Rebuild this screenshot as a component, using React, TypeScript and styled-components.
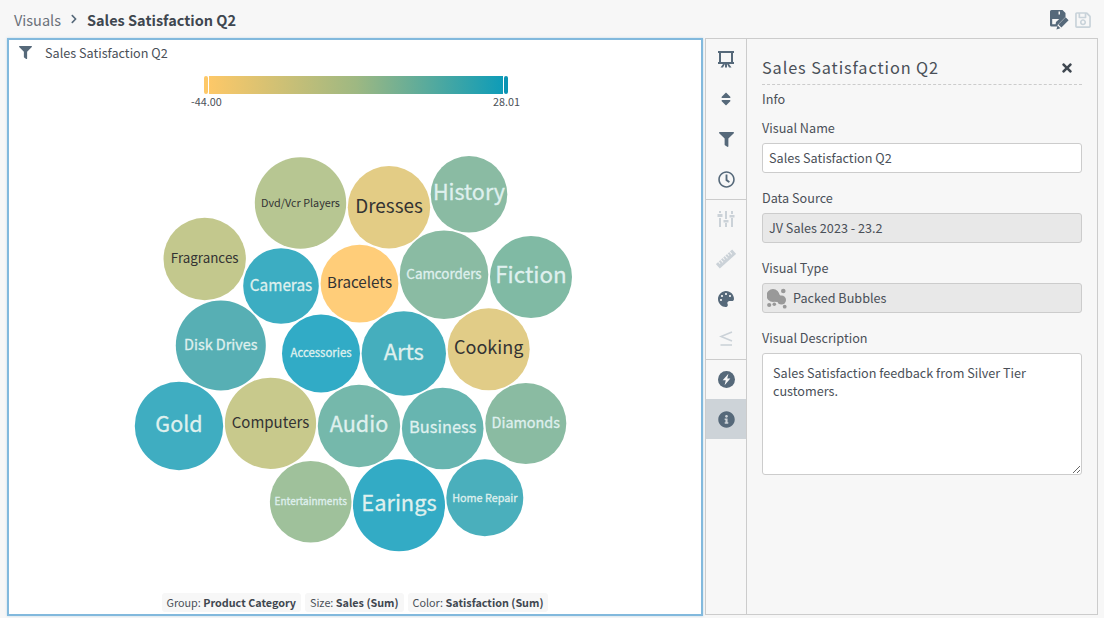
import React from "react"
import styled, { createGlobalStyle } from "styled-components"
import { FaFilter, FaSort, FaRegClock, FaPalette, FaInfoCircle, FaTimes, FaChevronRight, FaRegSave } from "react-icons/fa"

const GlobalStyle = createGlobalStyle`
    html, body {
        margin: 0;
        height: 100%;
        background: #f7f7f7;
        font-family: "Noto Sans CJK SC", "Noto Sans", sans-serif;
        color: #3f4750;
    }
    * { box-sizing: border-box; }
`

const Page = styled.div`
    width: 1104px;
    height: 618px;
    display: flex;
    flex-direction: column;
    overflow: hidden;
`

const Header = styled.header`
    height: 38px;
    padding: 0 12px 0 14px;
    display: flex;
    align-items: center;
    font-size: 14.5px;
`

const Crumb = styled.span`
    color: #6a7079;
`

const CrumbArrow = styled.span`
    display: flex;
    margin: 0 8px;
    font-size: 10px;
    color: #56697a;
`

const CrumbCurrent = styled.strong`
    font-weight: 700;
    color: #3f4750;
`

const HeaderActions = styled.div`
    margin-left: auto;
    padding-top: 2px;
    display: flex;
    align-items: center;
    gap: 5px;
`

const Content = styled.main`
    flex: 1;
    display: flex;
    padding: 0 6px 2px 7px;
    gap: 2px;
    min-height: 0;
`

const ChartPanel = styled.section`
    width: 696px;
    background: #fff;
    border: 2px solid #82b9dd;
    box-shadow: 0 0 2px rgba(130, 185, 221, 0.5);
    display: flex;
    flex-direction: column;
`

const ChartTitle = styled.div`
    height: 24px;
    padding: 0 0 0 10px;
    display: flex;
    align-items: center;
    gap: 13px;
    font-size: 12.65px;
    color: #4a5058;
    svg { color: #56697a; }
`

const Legend = styled.div`
    width: 304px;
    margin: 12px 0 0 195px;
`

const LegendBar = styled.div`
    height: 18px;
    display: flex;
    gap: 1px;
`

const LegendHandle = styled.div<{ $color: string }>`
    width: 4px;
    border-radius: 2px;
    background: ${(p) => p.$color};
`

const LegendRamp = styled.div`
    flex: 1;
    background: linear-gradient(90deg, #fdc868 0%, #9eb882 50%, #0e9cb8 100%);
`

const LegendLabels = styled.div`
    display: flex;
    justify-content: space-between;
    margin: 0 -12px 0 -13px;
    height: 16px;
    line-height: 14px;
    font-size: 10.8px;
    color: #4a5058;
`

const Canvas = styled.svg`
    display: block;
    width: 692px;
    flex: 1;
    min-height: 0;
    text {
        font-family: "Noto Sans CJK SC", "Noto Sans", sans-serif;
        text-anchor: middle;
        dominant-baseline: central;
    }
`

const Tags = styled.div`
    display: flex;
    justify-content: center;
    gap: 4px;
    height: 24px;
    padding: 3px 0 2px;
`

const Tag = styled.span`
    height: 19px;
    padding: 0 5px;
    line-height: 19px;
    border-radius: 3px;
    background: #f7f7f7;
    font-size: 10.8px;
    color: #4a5058;
    b { font-weight: 700; color: #3f4750; }
`

const SidePanel = styled.aside`
    width: 393px;
    height: 577px;
    border: 1px solid #ccc;
    display: flex;
`

const Rail = styled.nav`
    width: 41px;
    border-right: 1px solid #ccc;
    display: flex;
    flex-direction: column;
`

const RailButton = styled.div<{ $active?: boolean; $disabled?: boolean }>`
    height: 40px;
    display: flex;
    align-items: center;
    justify-content: center;
    color: ${(p) => (p.$disabled ? "#cbd2d8" : "#56697a")};
    background: ${(p) => (p.$active ? "#cdd3d8" : "transparent")};
`

const RailDivider = styled.div`
    height: 1px;
    background: #ccc;
    margin-bottom: -1px;
    position: relative;
`

const Form = styled.div`
    flex: 1;
    padding: 0 15px;
    display: flex;
    flex-direction: column;
`

const FormHead = styled.div`
    height: 46px;
    padding-top: 10px;
    border-bottom: 1px dashed #ccc;
    display: flex;
    align-items: center;
    justify-content: space-between;
`

const FormTitle = styled.h2`
    margin: 0;
    font-size: 16.3px;
    font-weight: 400;
    letter-spacing: 0.9px;
    color: #4a5058;
`

const CloseButton = styled.span`
    display: flex;
    margin: 3px 8px 0 0;
    font-size: 14px;
    color: #3f4750;
`

const SectionName = styled.div`
    height: 30px;
    line-height: 28px;
    font-size: 12.65px;
    color: #4a5058;
`

const Label = styled.label`
    display: block;
    height: 28px;
    line-height: 26px;
    font-size: 12.65px;
    color: #4a5058;
`

const Field = styled.div`
    margin-bottom: 12px;
`

const TextInput = styled.input<{ $locked?: boolean }>`
    display: block;
    width: 100%;
    height: 30px;
    padding: 0 6px 1px;
    border: 1px solid #ccc;
    border-radius: 3px;
    background: ${(p) => (p.$locked ? "#e8e8e8" : "#fff")};
    font: 400 12.65px "Noto Sans CJK SC", "Noto Sans", sans-serif;
    color: #4a5058;
    outline: none;
`

const TypeBox = styled.div`
    height: 30px;
    padding: 0 4px;
    display: flex;
    align-items: center;
    gap: 4px;
    border: 1px solid #ccc;
    border-radius: 3px;
    background: #e8e8e8;
    font-size: 12.65px;
    color: #4a5058;
`

const TypeName = styled.span`
    margin-bottom: 2px;
`

const TextArea = styled.textarea`
    display: block;
    width: 100%;
    height: 122px;
    padding: 10px;
    border: 1px solid #ccc;
    border-radius: 3px;
    background: #fff;
    font: 400 12.65px/18px "Noto Sans CJK SC", "Noto Sans", sans-serif;
    color: #4a5058;
    outline: none;
`

interface Bubble {
    name: string
    x: number
    y: number
    r: number
    fill: string
    size: number
    light?: boolean
}

const bubbles: Bubble[] = [
    { name: "Dvd/Vcr Players", x: 300.5, y: 203, r: 45.7, fill: "#b7c692", size: 10.8 },
    { name: "Dresses", x: 389, y: 207.3, r: 41.2, fill: "#e3cc85", size: 18.9 },
    { name: "History", x: 469, y: 194.3, r: 38.3, fill: "#8abba3", size: 21.5, light: true },
    { name: "Fragrances", x: 204.7, y: 259, r: 41.2, fill: "#c3c88d", size: 13.4 },
    { name: "Cameras", x: 281, y: 286, r: 37.8, fill: "#3cadc2", size: 15.3, light: true },
    { name: "Bracelets", x: 359.5, y: 283.7, r: 38.9, fill: "#ffcd79", size: 15.2 },
    { name: "Camcorders", x: 444, y: 274.7, r: 44.3, fill: "#8abba3", size: 13.4, light: true },
    { name: "Fiction", x: 531, y: 277, r: 41, fill: "#80baa4", size: 22.4, light: true },
    { name: "Disk Drives", x: 220.8, y: 345.5, r: 45, fill: "#57afb4", size: 14.4, light: true },
    { name: "Accessories", x: 321, y: 353.5, r: 39, fill: "#31abc6", size: 11.4, light: true },
    { name: "Arts", x: 403.8, y: 353.5, r: 42.2, fill: "#45aebd", size: 22, light: true },
    { name: "Cooking", x: 488.7, y: 349.3, r: 41, fill: "#e1cc87", size: 18 },
    { name: "Gold", x: 179, y: 426, r: 44.2, fill: "#3fadc1", size: 21.5, light: true },
    { name: "Computers", x: 270.5, y: 423.3, r: 45.6, fill: "#c8c98c", size: 15 },
    { name: "Audio", x: 359, y: 426, r: 41.2, fill: "#75b8ab", size: 21.6, light: true },
    { name: "Business", x: 442.7, y: 428.5, r: 40.8, fill: "#67b5b0", size: 16.4, light: true },
    { name: "Diamonds", x: 525.8, y: 423.5, r: 40.5, fill: "#8abba2", size: 14.4, light: true },
    { name: "Entertainments", x: 310.7, y: 501.8, r: 40.8, fill: "#9fc19b", size: 10, light: true },
    { name: "Earings", x: 399, y: 505.3, r: 46, fill: "#33abc5", size: 21.8, light: true },
    { name: "Home Repair", x: 484.8, y: 497.8, r: 38.5, fill: "#4aafbc", size: 10.8, light: true },
]

const SaveEditIcon = () => (
    <svg width="19" height="20" viewBox="0 0 19 20" fill="#56697a">
        <path
            fillRule="evenodd"
            d="M1.5 0 H12.5 L15.5 3 V7 L7.5 15 V16.5 H1.5 A1.5 1.5 0 0 1 0 15 V1.5 A1.5 1.5 0 0 1 1.5 0 Z M8.5 1.5 H10 V4.5 H8.5 Z M2.2 9 V14.3 H5.6 L6 12 L9.2 9 Z"
        />
        <path d="M8.4 14.4 L15.6 7.2 L18.6 10.2 L11.4 17.4 Z M7.6 15.6 L10.4 18.2 L6.4 19.4 Z" />
    </svg>
)

const ScreenIcon = () => (
    <svg width="18" height="18" viewBox="0 0 18 18" fill="#56697a">
        <path d="M1 1 H17 V3 H16 V12 H17 V14 H1 V12 H2 V3 H1 Z M4 3 V12 H14 V3 Z" fillRule="evenodd" />
        <path d="M3.5 17.5 L6 14 H8 L6 17.5 Z M8 14 H10 V17.5 H8 Z M10 14 H12 L14.5 17.5 H12 Z" />
    </svg>
)

const SlidersIcon = () => (
    <svg width="18" height="18" viewBox="0 0 18 18" fill="currentColor">
        <path d="M2 1 H4 V3 H2 Z M2 8 H4 V17 H2 Z M8 1 H10 V9 H8 Z M8 13 H10 V17 H8 Z M14 1 H16 V4 H14 Z M14 8 H16 V17 H14 Z" />
        <path d="M0.5 4 H5.5 V7 H0.5 Z M6.5 10 H11.5 V12.5 H6.5 Z M12.5 5 H17.5 V7.5 H12.5 Z" />
    </svg>
)

const RulerIcon = () => (
    <svg width="20" height="20" viewBox="0 0 20 20" fill="currentColor">
        <g transform="rotate(-42 10 10)">
            <path
                fillRule="evenodd"
                d="M-1 7 H21 V13 H-1 Z M2 7 H3 V9.5 H2 Z M5 7 H6 V10.5 H5 Z M8 7 H9 V9.5 H8 Z M11 7 H12 V10.5 H11 Z M14 7 H15 V9.5 H14 Z M17 7 H18 V10.5 H17 Z"
            />
        </g>
    </svg>
)

const BoltCircleIcon = () => (
    <svg width="17" height="17" viewBox="0 0 16 16">
        <circle cx="8" cy="8" r="8" fill="#56697a" />
        <path d="M9.8 2.6 L4.4 8.8 H7.3 L6.2 13.4 L11.6 7 H8.7 Z" fill="#f7f7f7" />
    </svg>
)

const LessEqualIcon = () => (
    <svg width="14" height="16" viewBox="0 0 14 16" fill="none" stroke="currentColor" strokeWidth="1.6">
        <path d="M13 1 L2 5.5 L13 10" />
        <path d="M1.5 14 H13" />
    </svg>
)

const BubblesIcon = () => (
    <svg width="22" height="22" viewBox="0 0 22 22" fill="#999">
        <circle cx="6" cy="8.5" r="6.5" />
        <circle cx="14.5" cy="13" r="4.5" />
        <circle cx="10" cy="11" r="4" />
        <circle cx="16.3" cy="4" r="2.3" />
        <circle cx="17.7" cy="19.7" r="1.9" />
        <circle cx="2.2" cy="18" r="2.1" />
        <circle cx="7.3" cy="17.3" r="1.8" />
    </svg>
)

export default function App() {
    return (
        <Page>
            <GlobalStyle />
            <Header>
                <Crumb>Visuals</Crumb>
                <CrumbArrow><FaChevronRight /></CrumbArrow>
                <CrumbCurrent>Sales Satisfaction Q2</CrumbCurrent>
                <HeaderActions>
                    <SaveEditIcon />
                    <FaRegSave size={18} color="#c9d3da" />
                </HeaderActions>
            </Header>
            <Content>
                <ChartPanel>
                    <ChartTitle>
                        <FaFilter size={13} />
                        Sales Satisfaction Q2
                    </ChartTitle>
                    <Legend>
                        <LegendBar>
                            <LegendHandle $color="#fdc868" />
                            <LegendRamp />
                            <LegendHandle $color="#0b93b3" />
                        </LegendBar>
                        <LegendLabels>
                            <span>-44.00</span>
                            <span>28.01</span>
                        </LegendLabels>
                    </Legend>
                    <Canvas viewBox="9 110 692 480" preserveAspectRatio="xMinYMin meet">
                        {bubbles.map((b) => (
                            <g key={b.name}>
                                <circle cx={b.x} cy={b.y} r={b.r} fill={b.fill} />
                                <text
                                    x={b.x}
                                    y={b.y - 1 - (b.size - 10) / 4}
                                    fontSize={b.size}
                                    fill={b.light ? "#dff0ee" : "#333"}
                                    stroke={b.light ? "#dff0ee" : "none"}
                                    strokeWidth={0.3}
                                >
                                    {b.name}
                                </text>
                            </g>
                        ))}
                    </Canvas>
                    <Tags>
                        <Tag>Group: <b>Product Category</b></Tag>
                        <Tag>Size: <b>Sales (Sum)</b></Tag>
                        <Tag>Color: <b>Satisfaction (Sum)</b></Tag>
                    </Tags>
                </ChartPanel>
                <SidePanel>
                    <Rail>
                        <RailButton><ScreenIcon /></RailButton>
                        <RailButton><FaSort size={16} /></RailButton>
                        <RailButton><FaFilter size={15} /></RailButton>
                        <RailButton><FaRegClock size={17} /></RailButton>
                        <RailDivider />
                        <RailButton $disabled><SlidersIcon /></RailButton>
                        <RailButton $disabled><RulerIcon /></RailButton>
                        <RailButton><FaPalette size={16} /></RailButton>
                        <RailButton $disabled><LessEqualIcon /></RailButton>
                        <RailDivider />
                        <RailButton><BoltCircleIcon /></RailButton>
                        <RailButton $active><FaInfoCircle size={17} /></RailButton>
                    </Rail>
                    <Form>
                        <FormHead>
                            <FormTitle>Sales Satisfaction Q2</FormTitle>
                            <CloseButton><FaTimes /></CloseButton>
                        </FormHead>
                        <SectionName>Info</SectionName>
                        <Field>
                            <Label>Visual Name</Label>
                            <TextInput readOnly value="Sales Satisfaction Q2" />
                        </Field>
                        <Field>
                            <Label>Data Source</Label>
                            <TextInput $locked readOnly value="JV Sales 2023 - 23.2" />
                        </Field>
                        <Field>
                            <Label>Visual Type</Label>
                            <TypeBox><BubblesIcon /><TypeName>Packed Bubbles</TypeName></TypeBox>
                        </Field>
                        <Field>
                            <Label>Visual Description</Label>
                            <TextArea readOnly value="Sales Satisfaction feedback from Silver Tier customers." />
                        </Field>
                    </Form>
                </SidePanel>
            </Content>
        </Page>
    )
}
